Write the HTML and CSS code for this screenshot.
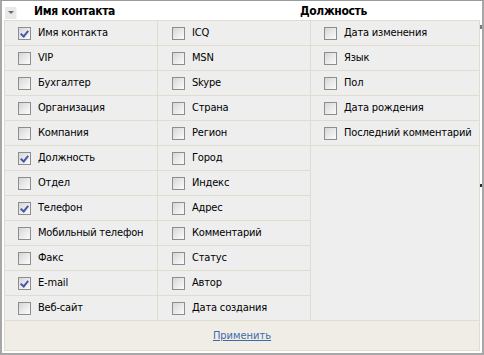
FILE: index.html
```html
<!DOCTYPE html>
<html lang="ru">
<head>
<meta charset="utf-8">
<title>Колонки</title>
<link rel="stylesheet" href="styles.css">
</head>
<body>
<div class="frame">
  <div class="header">
    <span class="dd-btn"><span class="tri"></span></span>
    <span class="h-name">Имя контакта</span>
    <span class="h-pos">Должность</span>
  </div>
  <span class="sb-mark sb-a"></span>
  <span class="sb-mark sb-b"></span>

  <div class="popup">
    <div class="grid">
      <div class="col col-1">
        <label class="cell"><span class="cb on"></span><span class="lbl">Имя контакта</span></label>
        <label class="cell"><span class="cb"></span><span class="lbl">VIP</span></label>
        <label class="cell"><span class="cb"></span><span class="lbl">Бухгалтер</span></label>
        <label class="cell"><span class="cb"></span><span class="lbl">Организация</span></label>
        <label class="cell"><span class="cb"></span><span class="lbl">Компания</span></label>
        <label class="cell"><span class="cb on"></span><span class="lbl">Должность</span></label>
        <label class="cell"><span class="cb"></span><span class="lbl">Отдел</span></label>
        <label class="cell"><span class="cb on"></span><span class="lbl">Телефон</span></label>
        <label class="cell"><span class="cb"></span><span class="lbl">Мобильный телефон</span></label>
        <label class="cell"><span class="cb"></span><span class="lbl">Факс</span></label>
        <label class="cell"><span class="cb on"></span><span class="lbl">E-mail</span></label>
        <label class="cell"><span class="cb"></span><span class="lbl">Веб-сайт</span></label>
      </div>
      <div class="col col-2">
        <label class="cell"><span class="cb"></span><span class="lbl">ICQ</span></label>
        <label class="cell"><span class="cb"></span><span class="lbl">MSN</span></label>
        <label class="cell"><span class="cb"></span><span class="lbl">Skype</span></label>
        <label class="cell"><span class="cb"></span><span class="lbl">Страна</span></label>
        <label class="cell"><span class="cb"></span><span class="lbl">Регион</span></label>
        <label class="cell"><span class="cb"></span><span class="lbl">Город</span></label>
        <label class="cell"><span class="cb"></span><span class="lbl">Индекс</span></label>
        <label class="cell"><span class="cb"></span><span class="lbl">Адрес</span></label>
        <label class="cell"><span class="cb"></span><span class="lbl">Комментарий</span></label>
        <label class="cell"><span class="cb"></span><span class="lbl">Статус</span></label>
        <label class="cell"><span class="cb"></span><span class="lbl">Автор</span></label>
        <label class="cell"><span class="cb"></span><span class="lbl">Дата создания</span></label>
      </div>
      <div class="col col-3">
        <label class="cell"><span class="cb"></span><span class="lbl">Дата изменения</span></label>
        <label class="cell"><span class="cb"></span><span class="lbl">Язык</span></label>
        <label class="cell"><span class="cb"></span><span class="lbl">Пол</span></label>
        <label class="cell"><span class="cb"></span><span class="lbl">Дата рождения</span></label>
        <label class="cell"><span class="cb"></span><span class="lbl">Последний комментарий</span></label>
      </div>
    </div>
    <div class="footer"><a class="apply" href="#">Применить</a></div>
  </div>
</div>
</body>
</html>
```
FILE: styles.css
```css
html, body {
  margin: 0;
  padding: 0;
  background: #ffffff;
}
body {
  font-family: "DejaVu Sans Condensed", "DejaVu Sans", sans-serif;
  font-stretch: condensed;
  font-size: 11px;
  color: #000;
}
.frame {
  position: relative;
  box-sizing: border-box;
  width: 484px;
  height: 355px;
  border: 2px solid #a7a7a7;
  border-top: 1px solid #9a9a9a;
  background: #fff;
  overflow: hidden;
}
.header {
  height: 19px;
  display: flex;
  align-items: center;
  font-weight: bold;
  font-size: 12px;
  letter-spacing: -0.35px;
}
.dd-btn {
  box-sizing: border-box;
  width: 12px;
  height: 12px;
  margin-left: 3px;
  margin-top: 4px;
  background: #e9e9e9;
  border-right: 1px solid #f4f4f4;
  display: flex;
  align-items: center;
  justify-content: center;
}
.tri {
  width: 0;
  height: 0;
  border-left: 3px solid transparent;
  border-right: 3px solid transparent;
  border-top: 3px solid #6d6d6d;
}
.h-name {
  margin-left: 17px;
  width: 266px;
}
.sb-mark {
  position: absolute;
  right: 0;
  width: 2px;
  background: #7a7a7a;
}
.sb-a { top: 24px; height: 4px; }
.sb-b { top: 183px; height: 3px; background: #3a2a2a; }

.popup {
  position: absolute;
  left: 2px;
  top: 19px;
  box-sizing: border-box;
  width: 476px;
  height: 331px;
  border: 1px solid #e0ddcf;
  background: #eeeeee;
  display: flex;
  flex-direction: column;
}
.grid {
  display: grid;
  grid-template-columns: 152px 152px 1fr;
  column-gap: 1px;
  background: #e0ddcf;
  border-bottom: 1px solid #e0ddcf;
}
.col {
  display: flex;
  flex-direction: column;
  background: #eeeeee;
}
.cell {
  box-sizing: border-box;
  height: 25px;
  display: flex;
  align-items: center;
  padding-left: 13px;
  border-bottom: 1px solid #e0ddcf;
  white-space: nowrap;
  letter-spacing: -0.18px;
}
.col-1 .cell:last-child,
.col-2 .cell:last-child {
  border-bottom: 0;
  height: 24px;
}
.col-2 .cell { padding-left: 14px; }
.lbl {
  position: relative;
  top: -1px;
}
.cb {
  box-sizing: border-box;
  flex: none;
  width: 13px;
  height: 13px;
  margin-right: 7px;
  border: 1px solid #8d8d8d;
  background: linear-gradient(135deg, #d5d5d5 0%, #e8e8e8 45%, #fbfbfb 100%);
  position: relative;
}
.cb.on::after {
  content: "";
  position: absolute;
  left: 3px;
  top: 1px;
  width: 3px;
  height: 6px;
  border-right: 2px solid #4558a8;
  border-bottom: 2px solid #4558a8;
  transform: rotate(40deg);
}
.footer {
  flex: 1;
  background: #f0ede7;
  display: flex;
  align-items: center;
  justify-content: center;
}
.apply {
  color: #3c6ca8;
  text-decoration: underline;
}
```
